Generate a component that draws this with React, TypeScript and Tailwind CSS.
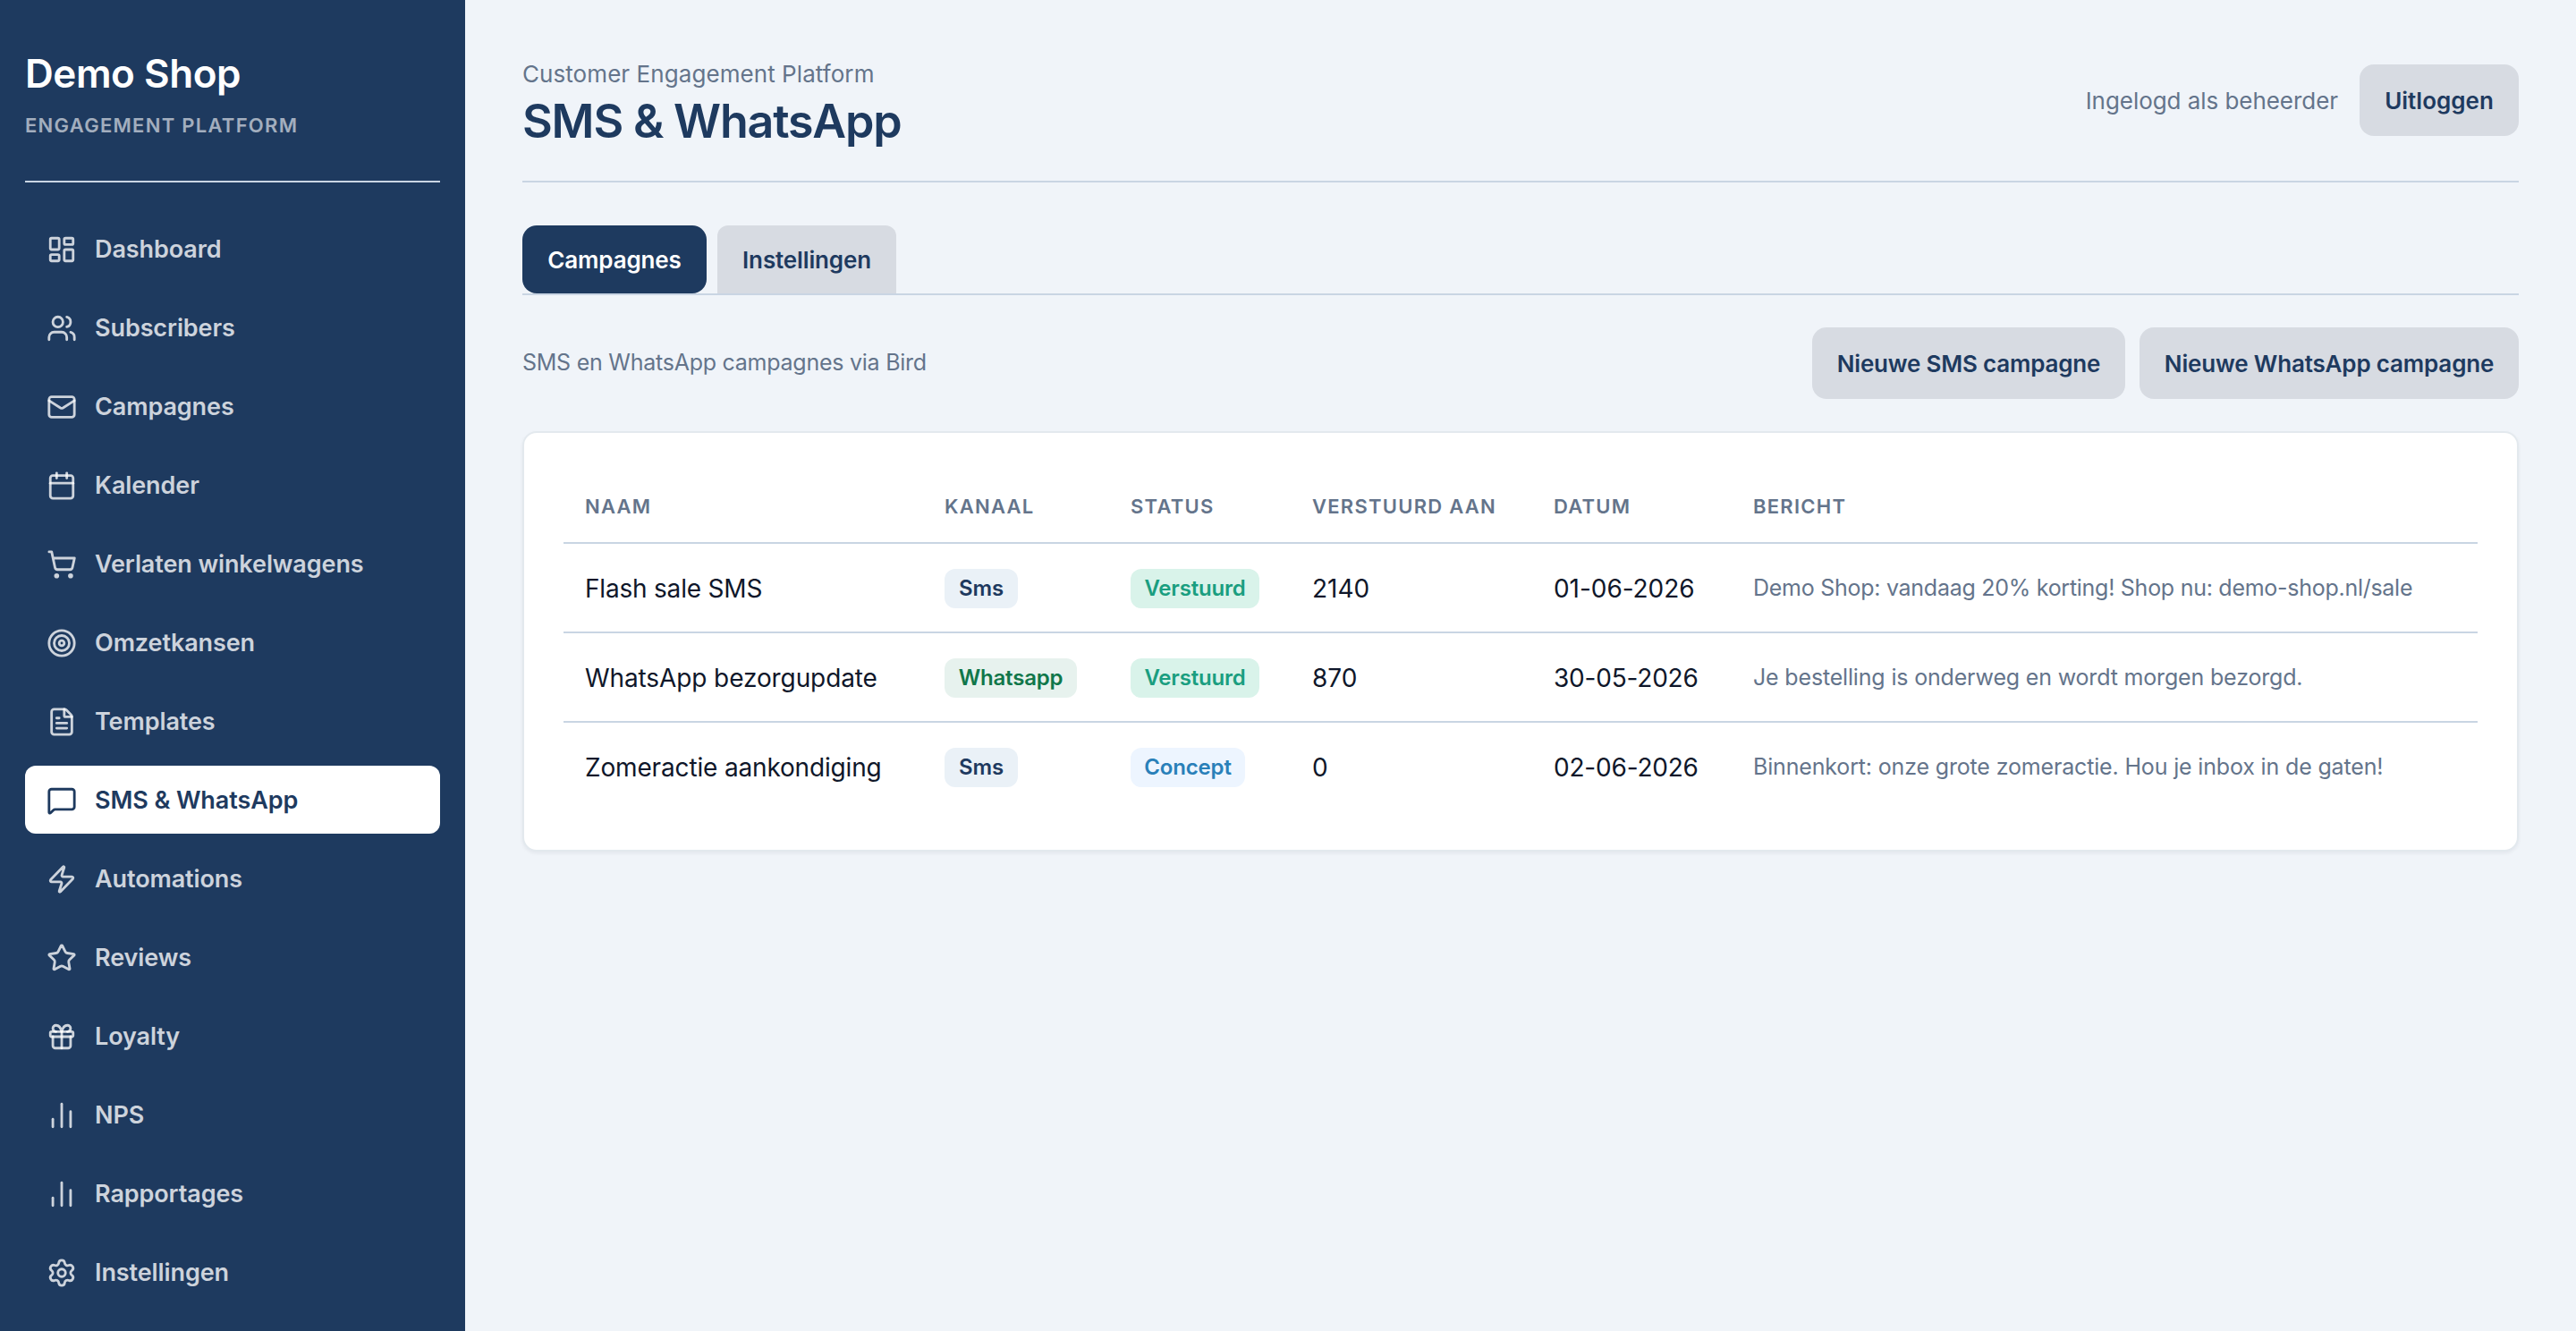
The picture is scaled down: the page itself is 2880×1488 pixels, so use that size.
import {
  LayoutDashboard, Users, Mail, Calendar, ShoppingCart, Target, FileText, MessageSquare,
  Zap, Star, Gift, ChartNoAxesColumn, Settings,
} from "lucide-react";

const nav = [
  { label: "Dashboard", icon: LayoutDashboard },
  { label: "Subscribers", icon: Users },
  { label: "Campagnes", icon: Mail },
  { label: "Kalender", icon: Calendar },
  { label: "Verlaten winkelwagens", icon: ShoppingCart },
  { label: "Omzetkansen", icon: Target },
  { label: "Templates", icon: FileText },
  { label: "SMS & WhatsApp", icon: MessageSquare, active: true },
  { label: "Automations", icon: Zap },
  { label: "Reviews", icon: Star },
  { label: "Loyalty", icon: Gift },
  { label: "NPS", icon: ChartNoAxesColumn },
  { label: "Rapportages", icon: ChartNoAxesColumn },
  { label: "Instellingen", icon: Settings },
];

const badgeStyles: Record<string, string> = {
  Sms: "w-[82px] bg-[#eaf1f7] text-[#1e3a5f]",
  Whatsapp: "w-[148px] bg-[#e7f2ee] text-[#10774a]",
  Verstuurd: "w-36 bg-[#d9f3ea] text-[#1a9e80]",
  Concept: "w-32 bg-[#edf5ff] text-[#2980b9]",
};

const rows = [
  { name: "Flash sale SMS", nameTracking: "tracking-[-0.2px]", channel: "Sms", status: "Verstuurd", sent: "2140", date: "01-06-2026", dateTracking: "tracking-[-0.05px]", message: "Demo Shop: vandaag 20% korting! Shop nu: demo-shop.nl/sale", messageTracking: "tracking-[-0.27px]" },
  { name: "WhatsApp bezorgupdate", nameTracking: "tracking-[-0.1px]", channel: "Whatsapp", status: "Verstuurd", sent: "870", date: "30-05-2026", dateTracking: "tracking-[-0.2px]", message: "Je bestelling is onderweg en wordt morgen bezorgd.", messageTracking: "tracking-[-0.17px]" },
  { name: "Zomeractie aankondiging", nameTracking: "tracking-[-0.16px]", channel: "Sms", status: "Concept", sent: "0", date: "02-06-2026", dateTracking: "tracking-[-0.2px]", message: "Binnenkort: onze grote zomeractie. Hou je inbox in de gaten!", messageTracking: "tracking-[-0.16px]" },
];

function Badge({ label }: { label: string }) {
  return (
    <span className={`flex h-11 items-center justify-center rounded-xl text-[24px] font-semibold tracking-[-0.18px] ${badgeStyles[label]}`}>
      {label}
    </span>
  );
}

function Button({ children, className }: { children: string; className: string }) {
  return (
    <button className={`flex h-20 items-center justify-center rounded-2xl bg-[#d7dbe2] text-[26px] font-semibold whitespace-nowrap text-[#1e3a5f] ${className}`}>
      {children}
    </button>
  );
}

export default function App() {
  return (
    <div className="flex h-[1488px] w-[2880px] overflow-hidden bg-[#f0f4f9] font-['Inter',sans-serif]">
      <aside className="flex w-[520px] shrink-0 flex-col bg-[#1e3a5f] px-7">
        <div className="flex h-[204px] flex-col border-b-2 border-[#c9d5e3] pt-14">
          <div className="text-[44px] leading-[52px] font-semibold tracking-[-0.01em] text-white">Demo Shop</div>
          <div className="mt-4 text-[22px] leading-8 font-semibold tracking-[1.28px] text-white/60">
            ENGAGEMENT PLATFORM
          </div>
        </div>
        <nav className="mt-9 flex flex-col gap-3">
          {nav.map(({ label, icon: Icon, active }) => (
            <a
              key={label}
              className={`flex h-[76px] items-center gap-5 rounded-xl px-6 pt-0.5 text-[27px] font-semibold tracking-[-0.1px] ${
                active ? "bg-white text-[#1e3a5f]" : "text-white/78"
              }`}
            >
              <Icon size={34} />
              {label}
            </a>
          ))}
        </nav>
      </aside>
      <main className="flex flex-1 flex-col px-16">
        <header className="flex h-[204px] justify-between border-b-2 border-[#c9d5e3]">
          <div className="pt-[62px]">
            <div className="text-[26px] leading-[42px] tracking-[0.07px] text-[#64748b]">Customer Engagement Platform</div>
            <h1 className="mt-px text-[52px] leading-[62px] font-semibold tracking-[-1.2px] text-[#1e3a5f]">SMS &amp; WhatsApp</h1>
          </div>
          <div className="mt-[72px] flex h-20 items-center gap-6 self-start">
            <span className="text-[26px] tracking-[-0.05px] text-[#64748b]">Ingelogd als beheerder</span>
            <Button className="w-[178px]">Uitloggen</Button>
          </div>
        </header>
        <div className="mt-12 flex gap-3 border-b-2 border-[#c9d5e3] text-[26px] font-semibold tracking-[-0.14px]">
          <div className="flex h-[76px] w-[206px] items-center justify-center rounded-2xl bg-[#1e3a5f] text-white">Campagnes</div>
          <div className="flex h-[76px] w-[200px] items-center justify-center rounded-t-xl bg-[#d7dbe2] text-[#1e3a5f]">Instellingen</div>
        </div>
        <div className="mt-9 flex h-20 items-center justify-between">
          <p className="text-[25px] tracking-[-0.25px] text-[#64748b]">SMS en WhatsApp campagnes via Bird</p>
          <div className="flex gap-4">
            <Button className="w-[350px] tracking-[-0.2px]">Nieuwe SMS campagne</Button>
            <Button className="w-[424px] tracking-[-0.17px]">Nieuwe WhatsApp campagne</Button>
          </div>
        </div>
        <section className="mt-9 rounded-2xl border-2 border-[#e3e9ee] bg-white p-11 shadow-[0_2px_4px_rgba(15,23,42,0.06)]">
          <table className="w-full table-fixed border-separate border-spacing-0 text-left">
            <thead>
              <tr className="h-20 text-[22px] text-[#64748b] *:border-b-2 *:border-[#c9d5e3] *:px-6 *:pb-0.5 *:font-semibold *:tracking-[1.25px]">
                <th className="w-[402px]">NAAM</th>
                <th className="w-[208px]">KANAAL</th>
                <th className="w-[203px]">STATUS</th>
                <th className="w-[270px]">VERSTUURD AAN</th>
                <th className="w-[223px]">DATUM</th>
                <th>BERICHT</th>
              </tr>
            </thead>
            <tbody>
              {rows.map((row) => (
                <tr
                  key={row.name}
                  className="h-[100px] text-[28px] whitespace-nowrap text-[#0f172a] *:border-b-2 *:border-[#c9d5e3] *:px-6 *:pt-0.5 last:h-[98px] last:*:border-b-0"
                >
                  <td className={row.nameTracking}>{row.name}</td>
                  <td><Badge label={row.channel} /></td>
                  <td><Badge label={row.status} /></td>
                  <td>{row.sent}</td>
                  <td className={row.dateTracking}>{row.date}</td>
                  <td className={`text-[25px] text-[#64748b] ${row.messageTracking}`}>{row.message}</td>
                </tr>
              ))}
            </tbody>
          </table>
        </section>
      </main>
    </div>
  );
}
